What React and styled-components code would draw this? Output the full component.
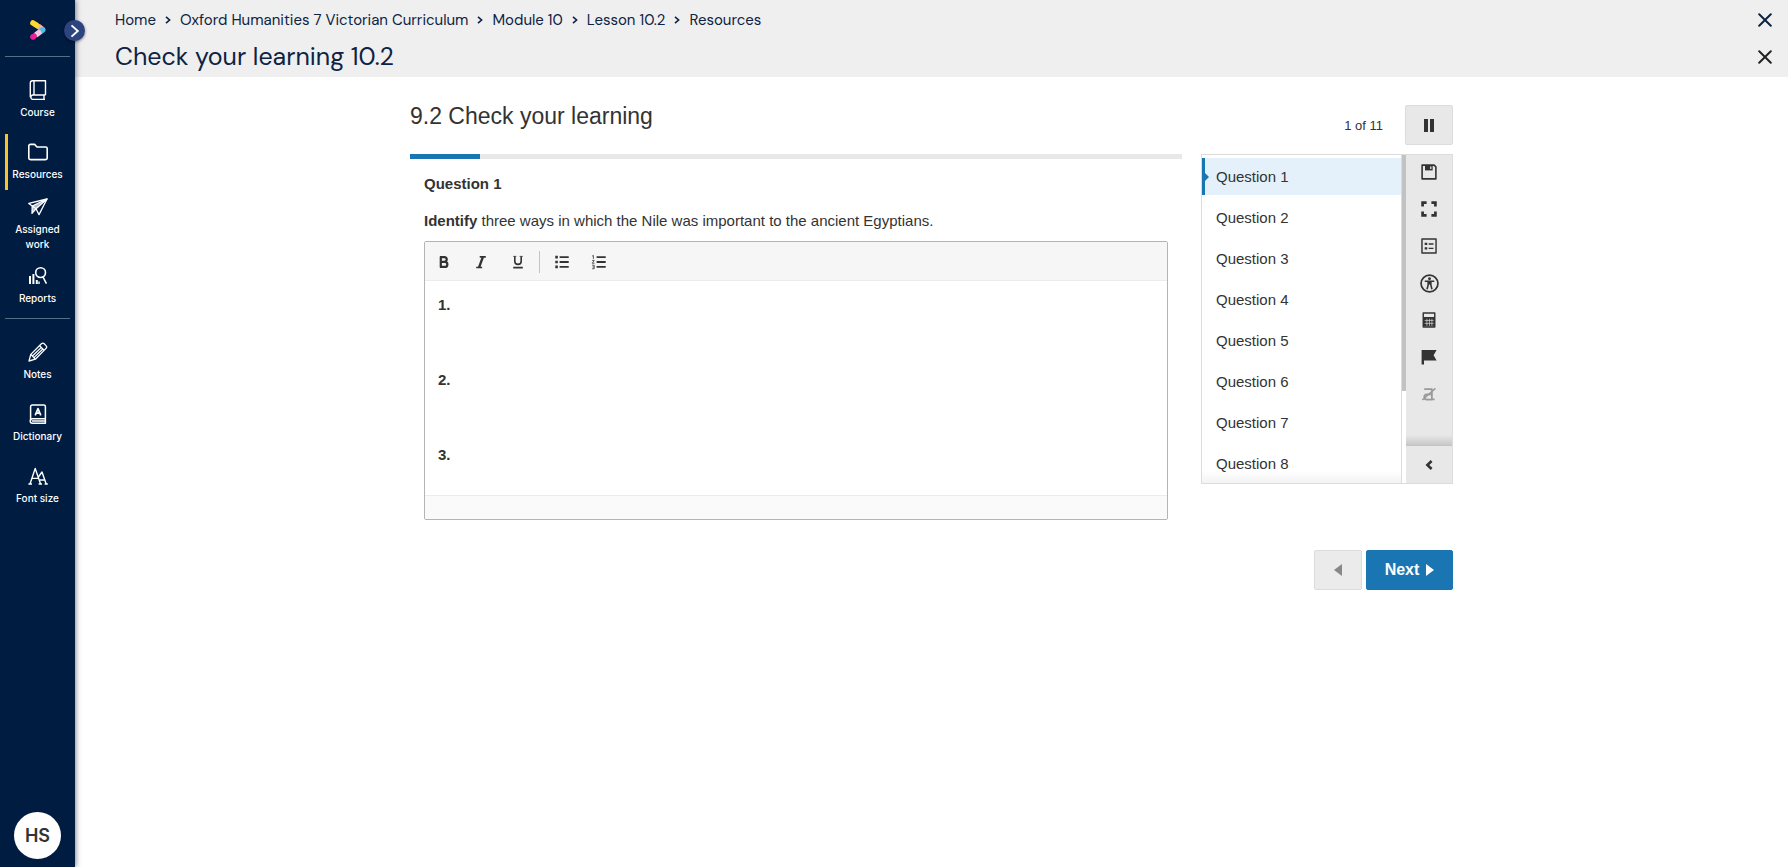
import React, { useState } from 'react'
import styled, { createGlobalStyle } from 'styled-components'

const color = {
    navy: '#001c40',
    ink: '#0d2344',
    text: '#333333',
    blue: '#1a76b2',
    paleBlue: '#e4f1fb',
    grey: '#efefef',
    panel: '#e8e8e8',
    border: '#dcdcdc',
    yellow: '#f5c32c',
}

const GlobalStyle = createGlobalStyle`
    * {
        box-sizing: border-box;
    }
    body {
        margin: 0;
        background: #fff;
        color: ${color.text};
        font-family: 'Liberation Sans', Arial, sans-serif;
        font-size: 15px;
    }
    button {
        padding: 0;
        border: 0;
        background: none;
        color: inherit;
        font: inherit;
        cursor: pointer;
    }
    svg {
        display: block;
        flex: none;
    }
`

const Page = styled.div`
    display: flex;
    min-height: 100vh;
`

/* sidebar */

const Sidebar = styled.nav`
    position: relative;
    z-index: 1;
    display: flex;
    flex-direction: column;
    flex: none;
    width: 75px;
    padding: 0 5px 8px;
    background: ${color.navy};
    color: #fff;
    font-family: Inter, 'Open Sans', sans-serif;
    box-shadow: 1px 0 5px rgba(0, 20, 50, 0.5);
`
const LogoLink = styled.a`
    display: flex;
    align-items: center;
    justify-content: center;
    height: 57px;
    padding-top: 4px;
    border-bottom: 1px solid #4e7088;
`
const Toggle = styled.button`
    position: absolute;
    top: 20px;
    right: -10px;
    display: flex;
    align-items: center;
    justify-content: center;
    width: 21px;
    height: 21px;
    border-radius: 50%;
    background: #2c4480;
    box-shadow: 0 1px 3px rgba(0, 0, 0, 0.5);
`
const NavGroup = styled.div`
    display: flex;
    flex-direction: column;
    gap: 6px;
    padding: 15px 0 4px;

    & + & {
        border-top: 1px solid #4e7088;
    }
`
const NavItem = styled.a`
    display: flex;
    flex-direction: column;
    align-items: center;
    justify-content: center;
    gap: 5px;
    height: 56px;
    margin-left: -8px;
    margin-right: -8px;
    color: inherit;
    font-size: 10px;
    font-weight: 500;
    line-height: 15px;
    text-align: center;
    text-decoration: none;
`
const NavSlot = styled.div`
    border-left: 3px solid ${props => (props.$active ? color.yellow : 'transparent')};
    padding-right: 3px;
`
const NavLabel = styled.span`
    max-width: 60px;
`
const Avatar = styled.button`
    align-self: center;
    width: 47px;
    height: 47px;
    margin-top: auto;
    border-radius: 50%;
    background: #fff;
    color: ${color.text};
    font-size: 18px;
    font-weight: 600;
`

/* header */

const Main = styled.div`
    flex: 1;
    min-width: 0;
`
const Header = styled.header`
    padding: 1px 14px 2px 40px;
    background: ${color.grey};
    color: ${color.ink};
    font-family: 'DM Sans', Inter, 'Open Sans', sans-serif;
`
const HeaderRow = styled.div`
    display: flex;
    align-items: center;
    justify-content: space-between;
    height: 37px;
`
const Crumbs = styled.ol`
    display: flex;
    align-items: center;
    gap: 8px;
    margin: 0;
    padding: 0;
    list-style: none;
    font-size: 15px;
`
const Crumb = styled.li`
    display: flex;
    align-items: center;
    gap: 8px;

    a {
        color: inherit;
        text-decoration: none;
    }
`
const PageTitle = styled.h1`
    margin: 0;
    font-size: 25px;
    font-weight: 400;
`
const CloseButton = styled.button`
    display: flex;
    align-items: center;
    justify-content: center;
    width: 18px;
    height: 24px;
    color: ${props => (props.$dark ? '#222' : color.ink)};
`

/* assessment */

const Assessment = styled.main`
    display: grid;
    grid-template-columns: minmax(0, 1fr) 252px;
    column-gap: 19px;
    max-width: 1043px;
    margin: 0 auto;
    padding-top: 28px;
`
const QuizTitle = styled.h2`
    margin: 0;
    font-size: 23px;
    font-weight: 400;
    line-height: 22px;
`
const Status = styled.div`
    display: flex;
    align-items: center;
    justify-content: flex-end;
    gap: 22px;
    height: 40px;
    margin-bottom: 9px;
    font-size: 13px;
`
const PauseButton = styled.button`
    display: flex;
    align-items: center;
    justify-content: center;
    width: 48px;
    height: 40px;
    border: 1px solid ${color.border};
    border-radius: 2px;
    background: ${color.panel};
`
const Progress = styled.div`
    height: 5px;
    background: ${color.panel};
`
const ProgressFill = styled.div`
    height: 100%;
    background: ${color.blue};
`
const Question = styled.section`
    padding: 14px 14px 0;
`
const QuestionHeading = styled.h3`
    margin: 0;
    font-size: 15px;
    line-height: 22px;
`
const Prompt = styled.p`
    margin: 15px 0 9px;
    line-height: 22px;
`
const Editor = styled.div`
    border: 1px solid #b4b4b4;
    border-radius: 2px;
`
const EditorBar = styled.div`
    display: flex;
    align-items: center;
    height: 39px;
    padding-top: 2px;
    border-bottom: 1px solid #ececec;
    background: #f6f6f6;
`
const FormatButton = styled.button`
    display: flex;
    align-items: center;
    justify-content: center;
    width: 37px;
    height: 30px;
`
const Divider = styled.span`
    width: 1px;
    height: 22px;
    margin: 0 3px;
    background: #c4c4c4;
`
const Answer = styled.textarea`
    display: block;
    width: 100%;
    height: 214px;
    padding: 11px 13px 0;
    border: 0;
    outline: 0;
    resize: none;
    overflow: hidden;
    background: transparent;
    color: inherit;
    font: bold 15px/25px 'Liberation Sans', Arial, sans-serif;
`
const EditorFoot = styled.div`
    height: 24px;
    border-top: 1px solid #ececec;
    background: #fafafa;
`

/* question list and tools */

const Panel = styled.div`
    display: flex;
    height: 330px;
    border: 1px solid ${color.border};
`
const QuestionList = styled.ol`
    display: flex;
    flex-direction: column;
    gap: 4px;
    flex: 1;
    margin: 0;
    padding: 3px 0 0;
    overflow: hidden;
    list-style: none;
    background: linear-gradient(to top, #f3f3f3, #fff 12px);
`
const QuestionButton = styled.button`
    position: relative;
    display: block;
    width: 100%;
    height: 37px;
    padding-left: 11px;
    border-left: 3px solid ${props => (props.$active ? color.blue : 'transparent')};
    background: ${props => (props.$active ? color.paleBlue : 'none')};
    text-align: left;

    &::before {
        content: '';
        position: absolute;
        top: 15px;
        left: 0;
        display: ${props => (props.$active ? 'block' : 'none')};
        border: 4px solid transparent;
        border-left: 4px solid ${color.blue};
        border-right: 0;
    }
`
const ScrollTrack = styled.div`
    width: 5px;
    border-left: 1px solid ${color.border};
`
const ScrollThumb = styled.div`
    width: 4px;
    height: 72%;
    background: #c2c2c2;
`
const Tools = styled.div`
    display: flex;
    flex-direction: column;
    width: 46px;
    background: ${color.panel};
`
const ToolList = styled.div`
    display: flex;
    flex-direction: column;
    gap: 3px;
    flex: 1;
    border-bottom: 1px solid #c4c4c4;
    background: linear-gradient(to top, #c8c8c8, ${color.panel} 10px);
`
const ToolButton = styled.button`
    display: flex;
    align-items: center;
    justify-content: center;
    width: 100%;
    height: ${props => (props.$tall ? 37 : 34)}px;
    color: ${props => (props.disabled ? '#999' : color.text)};
`
const Paging = styled.div`
    grid-column: 1 / -1;
    display: flex;
    justify-content: flex-end;
    gap: 4px;
    margin-top: 30px;
`
const PageButton = styled.button`
    display: flex;
    align-items: center;
    justify-content: center;
    gap: 7px;
    width: ${props => (props.$primary ? 87 : 48)}px;
    height: 40px;
    border: 1px solid ${props => (props.$primary ? color.blue : color.border)};
    border-radius: 2px;
    background: ${props => (props.$primary ? color.blue : '#ebebeb')};
    color: ${props => (props.$primary ? '#fff' : '#888')};
    font-size: 16px;
    font-weight: 700;
`

/* icons */

const Line = ({ size = 20, width = 1.4, children }) => (
    <svg width={size} height={size} viewBox="0 0 20 20" fill="none" stroke="currentColor" strokeWidth={width} strokeLinejoin="round" aria-hidden>
        {children}
    </svg>
)

const Logo = () => (
    <svg width="16" height="20" viewBox="0 0 16 20" fill="none" strokeWidth="5.6" strokeLinecap="round" aria-hidden>
        <path d="M8.6 6.6 L12.4 9.4" stroke="#f3b3a4" />
        <path d="M3 3 L6.4 5.2" stroke="#ffd92e" />
        <path d="M12.6 10 L10.6 11.4" stroke="#4fbde6" />
        <path d="M8.8 12.8 L6.8 14.2" stroke="#efc9e2" />
        <path d="M4 16.2 L3 16.9" stroke="#ee1d9a" />
    </svg>
)

const Chevron = ({ size = 8, width = 1.6 }) => (
    <svg width={size} height={size} viewBox="0 0 8 8" fill="none" stroke="currentColor" strokeWidth={width} aria-hidden>
        <path d="M2 0.8 L5.6 4 L2 7.2" />
    </svg>
)

const Cross = () => (
    <svg width="14" height="14" viewBox="0 0 14 14" stroke="currentColor" strokeWidth="2" strokeLinecap="round" aria-hidden>
        <path d="M1.2 1.2 L12.8 12.8 M12.8 1.2 L1.2 12.8" />
    </svg>
)

const navIcons = {
    Course: (
        <Line>
            <path d="M17.5 15 H4.5 A2.3 2.3 0 0 0 4.5 19.4 H17 M4.5 0.8 H17.5 V15 M2.3 17.2 V3 A2.2 2.2 0 0 1 4.5 0.8 M6 0.8 V15 M16 15 V19.4" />
        </Line>
    ),
    Resources: (
        <Line width={1.6}>
            <path d="M0.8 16 V4 A1.6 1.6 0 0 1 2.4 2.4 H6.6 L9 5 H17.6 A1.6 1.6 0 0 1 19.2 6.6 V16 A1.6 1.6 0 0 1 17.6 17.6 H2.4 A1.6 1.6 0 0 1 0.8 16 Z" />
        </Line>
    ),
    'Assigned work': (
        <Line width={1.3}>
            <path d="M0.8 6.4 L19 2 L11 17.6 L8 11.8 Z" />
            <path d="M19 2 L8 11.8 L4 16.4 L4.2 9 Z M8 11.8 L4 16.4" fill="currentColor" fillOpacity="0.7" />
        </Line>
    ),
    Reports: (
        <Line width={1.6}>
            <path d="M2 10 V18 M5.4 8 V18 M8.8 14 V18" strokeWidth="2" />
            <circle cx="12.6" cy="6.6" r="4.9" />
            <path d="M15 11 L18.4 17.6" />
            <path d="M11 15.6 V18" strokeWidth="1.4" />
        </Line>
    ),
    Notes: (
        <Line width={1.3}>
            <path d="M1 19 L2.8 12.4 L13.4 1.8 A2 2 0 0 1 16.2 1.8 L18 3.6 A2 2 0 0 1 18 6.4 L7.4 17.2 Z" />
            <path d="M2.8 12.4 L7.4 17.2 M11.6 3.8 L16 8.2 M4.4 14 L13.4 5.4 M6 15.6 L14.8 7" />
        </Line>
    ),
    Dictionary: (
        <Line width={1.5}>
            <path d="M17.4 14.8 H4.4 A2.2 2.2 0 0 0 4.4 19.2 H17.4 V2.6 A1.6 1.6 0 0 0 15.8 1 H4.2 A1.6 1.6 0 0 0 2.6 2.6 V17" />
            <path d="M4 17 H17" />
            <path d="M7.2 11.4 L10 4.6 L12.8 11.4 M8.2 9.2 H11.8" strokeWidth="1.7" />
        </Line>
    ),
    'Font size': (
        <Line width={1.4}>
            <path d="M2 18 L7.2 2.4 L12.6 18 M4 12.4 H10.6 M0.4 18 H4 M10.6 18 H14" />
            <path d="M10.4 11 L14 6 L18.2 18 M11.8 14 H16.8 M16.6 18 H19.8" />
        </Line>
    ),
}

const BoldIcon = () => (
    <Line size={16}>
        <path d="M6 3 V17 M5 3.8 H10.4 A3 3 0 0 1 10.4 9.8 H6 M10.4 9.8 H11 A3.2 3.2 0 0 1 11 16.2 H5" strokeWidth="2.8" />
    </Line>
)
const ItalicIcon = () => (
    <Line size={16} width={2}>
        <path d="M8.4 3.6 H16 M4 16.8 H11.4" />
        <path d="M12.4 3.6 L7.6 16.8" strokeWidth="3" />
    </Line>
)
const UnderlineIcon = () => (
    <Line size={16} width={2}>
        <path d="M6 3 V9 A4 4 0 0 0 14 9 V3 M4 17 H16" />
        <path d="M4 3 H8 M12 3 H16" strokeWidth="1" />
    </Line>
)
const BulletsIcon = () => (
    <Line size={16} width={2.2}>
        <path d="M7 4 H18.4 M7 10 H18.4 M7 16 H18.4" />
        <path d="M1.6 4 H4.8 M1.6 10 H4.8 M1.6 16 H4.8" strokeWidth="3.4" />
    </Line>
)
const NumbersIcon = () => (
    <Line size={16} width={2.2}>
        <path d="M7 4 H18.4 M7 10 H18.4 M7 16 H18.4" />
        <path d="M1.4 2.6 L3 1.8 V6 M1.4 8 H4 L1.6 11.6 H4.4 M1.4 14 H4 V18.4 H1.4 M2 16.2 H4" strokeWidth="1" />
    </Line>
)

const tools = [
    {
        label: 'Save',
        icon: (
            <Line size={16} width={2}>
                <path d="M1.4 1.4 H16.4 L18.6 3.6 V18.6 H1.4 Z" />
                <path d="M5 1.4 H14.6 V8 H5 Z" fill="currentColor" stroke="none" />
                <path d="M12.2 3 V6.4" stroke="#e8e8e8" strokeWidth="1.6" />
            </Line>
        ),
    },
    {
        label: 'Fullscreen',
        icon: (
            <Line size={16} width={3.4}>
                <path d="M2 7 V2 H7 M13 2 H18 V7 M18 13 V18 H13 M7 18 H2 V13" strokeLinejoin="miter" />
            </Line>
        ),
    },
    {
        label: 'Review',
        icon: (
            <Line size={16} width={1.8}>
                <path d="M1.2 1.2 H18.8 V18.8 H1.2 Z" />
                <path d="M4.6 7.4 H7.8 M4.6 13 H7.8" strokeWidth="3" />
                <path d="M9.6 7.4 H15.6 M9.6 13 H15.6" />
            </Line>
        ),
    },
    {
        label: 'Accessibility',
        icon: (
            <Line size={19} width={1.8}>
                <circle cx="10" cy="10" r="8.9" />
                <circle cx="10" cy="5" r="1.5" fill="currentColor" stroke="none" />
                <path d="M5 7.6 H15 M10 8 V11 M8.6 8 V11.4 L7.4 16 M11.4 8 V11.4 L12.6 16" strokeWidth="1.7" />
            </Line>
        ),
    },
    {
        label: 'Calculator',
        icon: (
            <Line size={16} width={1.8}>
                <path d="M2.8 1.2 H17.2 V18.8 H2.8 Z M2.8 7 H17.2" />
                <path d="M3 7 H17 V18 H3 Z" fill="currentColor" stroke="none" />
                <path d="M4.6 10.6 H15.8 M4.6 14.2 H15.8 M7.4 8.4 V17.4 M10.6 8.4 V17.4 M13.6 8.4 V17.4" stroke="#e8e8e8" strokeWidth="0.8" />
            </Line>
        ),
    },
    {
        label: 'Flag',
        icon: (
            <svg width="16" height="16" viewBox="0 0 16 16" fill="currentColor" aria-hidden>
                <path d="M0.6 1 H15.6 L12.6 6.2 L15.6 11.6 H3 V15.6 H0.6 Z" />
            </svg>
        ),
    },
    {
        label: 'Clear highlighting',
        disabled: true,
        icon: (
            <Line size={16} width={2.2}>
                <path d="M4 4 H13.6 V17 H7.4 A3 3 0 0 1 7.4 10.4 H13.6 M13 16.8 H17" />
                <path d="M1.6 17.4 L18 3" strokeWidth="1.8" />
            </Line>
        ),
    },
]

const courseLinks = ['Course', 'Resources', 'Assigned work', 'Reports']
const toolLinks = ['Notes', 'Dictionary', 'Font size']
const crumbs = ['Home', 'Oxford Humanities 7 Victorian Curriculum', 'Module 10', 'Lesson 10.2', 'Resources']
const total = 11

const NavLinks = ({ items, active }) => (
    <NavGroup>
        {items.map(item => (
            <NavSlot key={item} $active={item === active}>
                <NavItem href="#" aria-current={item === active ? 'page' : undefined}>
                    {navIcons[item]}
                    <NavLabel>{item}</NavLabel>
                </NavItem>
            </NavSlot>
        ))}
    </NavGroup>
)

const App = () => {
    const [current, setCurrent] = useState(1)
    const [answer, setAnswer] = useState('1.\n\n\n2.\n\n\n3.')

    return (
        <Page>
            <GlobalStyle />
            <Sidebar>
                <LogoLink href="#" aria-label="Dashboard"><Logo /></LogoLink>
                <Toggle aria-label="Expand menu"><Chevron size={14} width={1.1} /></Toggle>
                <NavLinks items={courseLinks} active="Resources" />
                <NavLinks items={toolLinks} />
                <Avatar>HS</Avatar>
            </Sidebar>
            <Main>
                <Header>
                    <HeaderRow>
                        <Crumbs>
                            {crumbs.map((crumb, i) => (
                                <Crumb key={crumb}>
                                    {i > 0 && <Chevron />}
                                    <a href="#">{crumb}</a>
                                </Crumb>
                            ))}
                        </Crumbs>
                        <CloseButton aria-label="Close resources"><Cross /></CloseButton>
                    </HeaderRow>
                    <HeaderRow>
                        <PageTitle>Check your learning 10.2</PageTitle>
                        <CloseButton $dark aria-label="Close activity"><Cross /></CloseButton>
                    </HeaderRow>
                </Header>
                <Assessment>
                    <QuizTitle>9.2 Check your learning</QuizTitle>
                    <Status>
                        <span>{current} of {total}</span>
                        <PauseButton aria-label="Pause">
                            <svg width="10" height="13" viewBox="0 0 10 13" fill="currentColor" aria-hidden>
                                <path d="M0 0 H4 V13 H0 Z M6 0 H10 V13 H6 Z" />
                            </svg>
                        </PauseButton>
                    </Status>
                    <div>
                        <Progress>
                            <ProgressFill style={{ width: `${(current / total) * 100}%` }} />
                        </Progress>
                        <Question>
                            <QuestionHeading>Question {current}</QuestionHeading>
                            <Prompt>
                                <b>Identify</b> three ways in which the Nile was important to the ancient Egyptians.
                            </Prompt>
                            <Editor>
                                <EditorBar>
                                    <FormatButton aria-label="Bold"><BoldIcon /></FormatButton>
                                    <FormatButton aria-label="Italic"><ItalicIcon /></FormatButton>
                                    <FormatButton aria-label="Underline"><UnderlineIcon /></FormatButton>
                                    <Divider />
                                    <FormatButton aria-label="Bulleted list"><BulletsIcon /></FormatButton>
                                    <FormatButton aria-label="Numbered list"><NumbersIcon /></FormatButton>
                                </EditorBar>
                                <Answer
                                    aria-label="Answer"
                                    value={answer}
                                    onChange={e => setAnswer(e.target.value)}
                                />
                                <EditorFoot />
                            </Editor>
                        </Question>
                    </div>
                    <Panel>
                        <QuestionList>
                            {Array.from(Array(8)).map((_, i) => (
                                <li key={i}>
                                    <QuestionButton $active={i + 1 === current} onClick={() => setCurrent(i + 1)}>
                                        Question {i + 1}
                                    </QuestionButton>
                                </li>
                            ))}
                        </QuestionList>
                        <ScrollTrack>
                            <ScrollThumb />
                        </ScrollTrack>
                        <Tools>
                            <ToolList>
                                {tools.map(tool => (
                                    <ToolButton key={tool.label} aria-label={tool.label} disabled={tool.disabled}>
                                        {tool.icon}
                                    </ToolButton>
                                ))}
                            </ToolList>
                            <ToolButton $tall aria-label="Collapse">
                                <svg width="8" height="10" viewBox="0 0 8 10" fill="none" stroke="currentColor" strokeWidth="2.6" aria-hidden>
                                    <path d="M6.6 1 L2.4 5 L6.6 9" />
                                </svg>
                            </ToolButton>
                        </Tools>
                    </Panel>
                    <Paging>
                        <PageButton aria-label="Previous">
                            <svg width="8" height="12" viewBox="0 0 8 12" fill="currentColor" aria-hidden>
                                <path d="M8 0 V12 L0 6 Z" />
                            </svg>
                        </PageButton>
                        <PageButton $primary onClick={() => setCurrent(Math.min(current + 1, total))}>
                            Next
                            <svg width="8" height="12" viewBox="0 0 8 12" fill="currentColor" aria-hidden>
                                <path d="M0 0 L8 6 L0 12 Z" />
                            </svg>
                        </PageButton>
                    </Paging>
                </Assessment>
            </Main>
        </Page>
    )
}

export default App
